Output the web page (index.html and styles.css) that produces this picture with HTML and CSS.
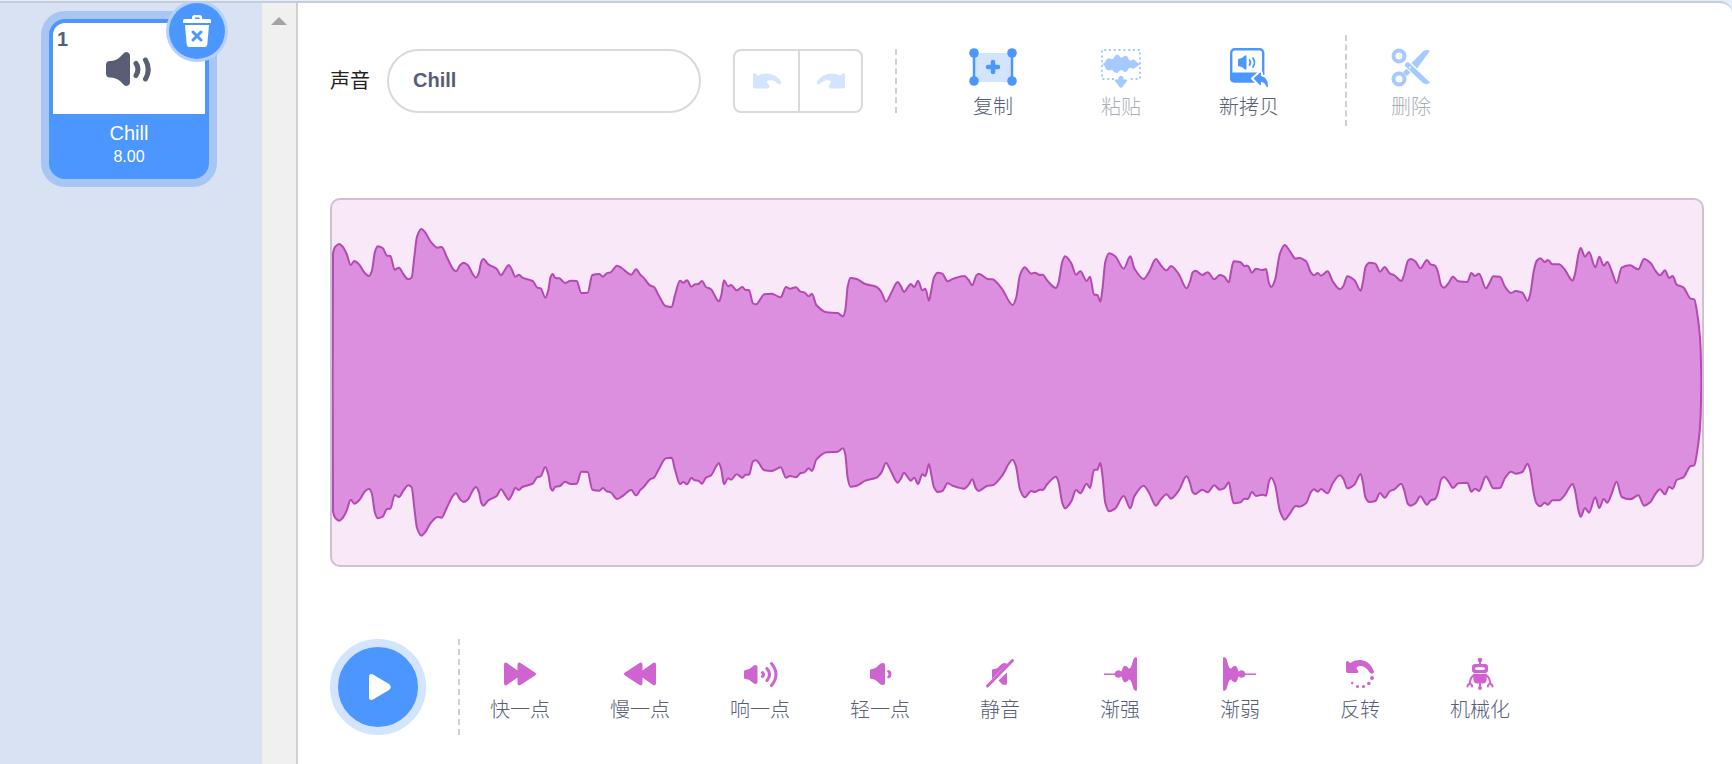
FILE: index.html
```html
<!DOCTYPE html>
<html lang="zh-CN">
<head>
  <meta charset="UTF-8">
  <title>声音</title>
  <link rel="stylesheet" href="styles.css">
</head>
<body>
  <div class="tab-strip"></div>
  <div class="sound-tab">
    <aside class="selector">
      <div class="sound-list">
        <div class="sound-item">
          <div class="sound-image">
            <span class="sound-number">1</span>
            <svg class="sound-icon" viewBox="0 0 46 34">
              <path d="M0 13q0-4 4-4 6 0 10-4l4-4q2-1.500 4-.5 2 1 2 3v27q0 2-2 3-2 1-4-.5l-4-4q-4-3.500-10-3.500-4 0-4-4z"/>
              <path class="wave" d="M30 11.500q4 5.500 0 12M39.500 8q5.500 9.500 0 19"/>
            </svg>
          </div>
          <div class="sound-name">Chill</div>
          <div class="sound-length">8.00</div>
          <button class="delete-btn" aria-label="Delete">
            <svg viewBox="0 0 28 32">
              <path d="M0 5.500q0-1.500 1.500-1.500H9V2.500Q9 0 11.500 0h5Q19 0 19 2.500V4h7.500Q28 4 28 5.500V8H0zM12 4h4.500V2.500H12zM2 10h24l-1.700 19.500Q24 32 21.500 32h-15Q4 32 3.700 29.500z"/>
              <path class="cross" d="M10 17l8 8M18 17l-8 8"/>
            </svg>
          </button>
        </div>
      </div>
      <div class="scrollbar"><span class="scroll-up"></span></div>
    </aside>

    <main class="editor">
      <div class="toolbar">
        <label for="sound-name">声音</label>
        <input type="text" id="sound-name" class="name-input" value="Chill">
        <div class="history">
          <button aria-label="Undo" disabled>
            <svg viewBox="0 0 28 16"><path d="M0 2Q0 0 1.500 0q1 0 2 1.500L5 2.500Q10 0 15 .5 24 1.500 28 9q.5 2-1.200 2.500-1 .2-2-.8Q21 6.500 15.500 7.500 13 8 14.500 10l1 1.500q1.500 2 .5 3-.5 1-2 1H2.500Q0 15.500 0 13z"/></svg>
          </button>
          <button aria-label="Redo" disabled>
            <svg viewBox="0 0 28 16"><path transform="matrix(-1 0 0 1 28 0)" d="M0 2Q0 0 1.500 0q1 0 2 1.500L5 2.500Q10 0 15 .5 24 1.500 28 9q.5 2-1.200 2.500-1 .2-2-.8Q21 6.500 15.500 7.500 13 8 14.500 10l1 1.500q1.500 2 .5 3-.5 1-2 1H2.500Q0 15.500 0 13z"/></svg>
          </button>
        </div>
        <div class="divider"></div>
        <div class="tools">
          <button class="tool">
            <svg viewBox="0 0 48 40">
              <rect x="5" y="5" width="38" height="29" fill="#d3e4ff"/>
              <path d="M5 5v28M43 5v28" stroke="#4c97ff" stroke-width="2.500"/>
              <g fill="#4c97ff">
                <circle cx="5" cy="5" r="4.800"/><circle cx="43" cy="5" r="4.800"/>
                <circle cx="5" cy="33" r="4.800"/><circle cx="43" cy="33" r="4.800"/>
              </g>
              <path d="M24 14v10M19 19h10" stroke="#4c97ff" stroke-width="4.500" stroke-linecap="round"/>
            </svg>
            复制
          </button>
          <button class="tool" disabled>
            <svg viewBox="0 0 42 40">
              <path d="M14 31H2V2h38v29H28" fill="none" stroke="#4c97ff" stroke-width="2" stroke-dasharray="2 2.800"/>
              <path fill="#4c97ff" d="M2 16q3-1 4-3.500 2-3.500 5-1.500 2 1 3-1.500Q16 5 19.500 8q1.500 3 3.500 1 3-2.500 5 .5 1 3.500 3 3 2.500-2 4.500.5l4.500 3.500-4.500 3q-2 2-4.500.5-2-1-3 2-2 3.500-5 1-2-2-3.500 0-3 3.500-6 .5-1-2.500-3-1.500-3 1.500-5-1.500Q5 17 2 16z"/>
              <path fill="#4c97ff" d="M18.500 29.500Q21 26 23.500 29.500v2h2.500q2 0 .8 1.800L22.500 39q-1.500 1.500-3 0l-4.300-5.700Q14 31.500 16 31.500h2.500z"/>
            </svg>
            粘贴
          </button>
          <button class="tool">
            <svg viewBox="0 0 40 40">
              <rect x="2.200" y="1.200" width="32" height="32" rx="3.500" fill="#fff" stroke="#4c97ff" stroke-width="2.400"/>
              <path fill="#4c97ff" d="M1 24.500h34V30q0 4.500-4 4.500H5Q1 34.500 1 30z"/>
              <path fill="#4c97ff" d="M9 12q0-1.500 1.500-1.500 2.500 0 4.500-2.200 2.500-2.200 2.500 0v12.400q0 2.200-2.500 0Q13 18.500 10.500 18.500 9 18.500 9 17z"/>
              <path fill="none" stroke="#4c97ff" stroke-width="1.800" stroke-linecap="round" d="M20.500 12q1.800 2.500 0 5M24 10q3 4.500 0 9"/>
              <path fill="#4c97ff" stroke="#fff" stroke-width="4" paint-order="stroke" d="M24.500 30.500l6-5.500q1.500-1 1.500.5v2.500q7.500 1.500 7 10.500-.3 1.500-1.500.2Q35.500 34 32 33.800v2.400q0 1.500-1.500.5z"/>
            </svg>
            新拷贝
          </button>
        </div>
        <div class="divider divider-tall"></div>
        <button class="tool" disabled>
          <svg viewBox="0 0 40 40">
            <g fill="none" stroke="#4c97ff" stroke-width="4">
              <circle cx="8" cy="8" r="5.500"/><circle cx="8" cy="31" r="5.500"/>
            </g>
            <path fill="#4c97ff" d="M20.500 15L32 3.500Q34 1.500 36.500 2l2.500.8L26 20.500zM12 24l6.500-6 4 4-7 6z"/>
            <path fill="#4c97ff" stroke="#fff" stroke-width="2" paint-order="stroke" d="M14 16q1.500-2.500 4-1.500L39 34.500q-3.500 3-7 .5L14.500 18.500q-1-1-.5-2.500z"/>
            <circle cx="19" cy="19.500" r="1" fill="#fff"/>
          </svg>
          删除
        </button>
      </div>

      <div class="waveform">
        <svg viewBox="0 0 4110 1095" preserveAspectRatio="none">
          <path id="wave"/>
        </svg>
      </div>

      <div class="effects-row">
        <button class="play-btn" aria-label="Play">
          <svg viewBox="0 0 22 26"><path d="M0 3q0-4 4-2.500l16 9.500q3.500 3 0 6L4 25.500Q0 27 0 23z"/></svg>
        </button>
        <div class="divider divider-effects"></div>
        <div class="effects">
          <button class="effect">
            <svg viewBox="0 0 32 32"><path d="M0 7q0-3.500 3-2l10.500 7.500V7q0-3.500 3-2L31 14.500q2 1.500 0 3L16.500 27q-3 1.500-3-2v-5.500L3 27q-3 1.500-3-2z"/></svg>
            快一点
          </button>
          <button class="effect">
            <svg viewBox="0 0 32 32"><path transform="matrix(-1 0 0 1 32 0)" d="M0 7q0-3.500 3-2l10.500 7.500V7q0-3.500 3-2L31 14.500q2 1.500 0 3L16.500 27q-3 1.500-3-2v-5.500L3 27q-3 1.500-3-2z"/></svg>
            慢一点
          </button>
          <button class="effect">
            <svg viewBox="0 0 32 32">
              <path d="M0 13.500Q0 12 1.500 12q3.500 0 6.500-3 1.500-2 3.500-2 2 0 2 2v15q0 2-2 2t-3.500-2q-3-3-6.500-3Q0 21 0 19.500z"/>
              <path class="line" d="M18.500 14.500q2 2 0 4M23 10.500q5 6 0 12M27.500 5.500q9 11 0 22"/>
            </svg>
            响一点
          </button>
          <button class="effect">
            <svg viewBox="0 0 32 32">
              <path d="M6 12.500Q6 11 7.500 11q4 0 7-3.800Q16.500 5 19 5q2 0 2 2v18q0 2-2 2-2.500 0-4.500-2.200-3-3.800-7-3.800Q6 21 6 19.500z"/>
              <path d="M23 13.500q.5-2 2.500-1.300 2 1.300 2 3.800 0 3-2 4-2 1-2.500-1 1.500-1 1.500-2.700 0-1.500-1.500-2.800z"/>
            </svg>
            轻一点
          </button>
          <button class="effect">
            <svg viewBox="0 0 32 32">
              <path d="M8 12.500Q8 11 9.500 11q4 0 6.500-3.500Q18 5 20.500 5l3 .8L8 21zM23 14.500V25q0 2-2 2-3 0-4.500-2.500L14.500 22.500z"/>
              <path class="line" d="M3.500 28l25-25.500"/>
            </svg>
            静音
          </button>
          <button class="effect">
            <svg viewBox="0 0 32 32">
              <path d="M0 15.500h10.500q1-3 3.500-3.300 2 0 3 1.300 1-.5 1.500-3 1-3.500 3.500-2.500 2 .5 2.500 2.500 2 .5 3.200-3.500L29.500 1Q30.500-.500 32-1 33-1 33 1v30q0 2-1 2-1.500-.500-2.500-2l-1.800-6q-1.200-4-3.200-3.500-.5 2-2.500 2.500-2.500 1-3.500-2.500-.5-2.500-1.500-3-1 1.300-3 1.300-2.500-.3-3.500-2.800H0z"/>
            </svg>
            渐强
          </button>
          <button class="effect">
            <svg viewBox="0 0 32 32">
              <path transform="matrix(-1 0 0 1 32 0)" d="M0 15.500h10.500q1-3 3.500-3.300 2 0 3 1.300 1-.5 1.500-3 1-3.500 3.500-2.500 2 .5 2.500 2.500 2 .5 3.200-3.500L29.500 1Q30.500-.500 32-1 33-1 33 1v30q0 2-1 2-1.500-.500-2.500-2l-1.800-6q-1.200-4-3.200-3.500-.5 2-2.500 2.500-2.500 1-3.500-2.500-.5-2.500-1.500-3-1 1.300-3 1.300-2.500-.3-3.500-2.800H0z"/>
            </svg>
            渐弱
          </button>
          <button class="effect">
            <svg viewBox="0 0 32 32">
              <path d="M2 5Q2 3 3.500 3 5 3.300 6 5q5-3.500 11-3 8 1 12 9 1.500 3 .5 4-2 1.500-4-.5-3-5.500-8-6.500-4-.3-5 1.500 0 1.500 1.500 3 1 2.500-1 2.500H4q-2 0-2-2z"/>
              <circle cx="28" cy="20" r="2"/><circle cx="24.800" cy="25.500" r="1.800"/><circle cx="19.500" cy="28.500" r="1.600"/><circle cx="13.500" cy="28.500" r="1.500"/><circle cx="8.200" cy="25" r="1.200"/>
            </svg>
            反转
          </button>
          <button class="effect">
            <svg viewBox="0 0 32 32">
              <path fill-rule="evenodd" d="M11 6h10q3 0 3 3v3q0 3-3 3H11q-3 0-3-3V9q0-3 3-3zm1.500 3.200q-1.500 0-1.500 1.400t1.500 1.400h7q1.500 0 1.500-1.400t-1.500-1.400z"/>
              <path d="M9 15.800h14l-.5 6.700q-.5 3-3.500 3h-6q-3 0-3.500-3z"/>
              <circle cx="16" cy="2" r="2.300"/><circle cx="16" cy="30" r="2"/>
              <path class="thin" d="M16 3v4M16 25v4M9.500 17.500Q6 20 5.800 25.500M22.500 17.500Q26 20 26.200 25.500M3.500 28.500q0-2.500 2.300-2.500t2.300 2.500M23.900 28.500q0-2.500 2.300-2.500t2.300 2.500"/>
            </svg>
            机械化
          </button>
        </div>
      </div>
    </main>
  </div>

  <script src="waveform.js"></script>
</body>
</html>
```
FILE: styles.css
```css
* {
  box-sizing: border-box;
}
body {
  margin: 0;
  min-height: 100vh;
  display: flex;
  flex-direction: column;
  background: #e5edf8;
  color: #575e75;
  font-family: "Liberation Sans", "Noto Sans CJK SC", sans-serif;
  font-size: 20px;
  line-height: 24px;
}
button {
  padding: 0;
  border: none;
  background: none;
  color: inherit;
  font: inherit;
  cursor: pointer;
}
svg {
  display: block;
  overflow: visible;
}
.tab-strip {
  height: 1px;
}
.sound-tab {
  flex: 1;
  display: flex;
  border-top: 2px solid #c3cddc;
  border-top-right-radius: 12px;
  background: #fff;
}

/* Sound list */
.selector {
  flex: none;
  display: flex;
  width: 298px;
  border-right: 2px solid #d0d0d2;
  background: #d9e2f3;
  overflow: hidden;
}
.sound-list {
  flex: 1;
  padding: 16px 4px 0 0;
}
.sound-item {
  position: relative;
  width: 160px;
  height: 160px;
  margin: 0 auto;
  border: 4px solid #4c97ff;
  border-radius: 16px;
  background: #4c97ff;
  box-shadow: 0 0 0 8px #a8c6f4;
  color: #fff;
  text-align: center;
}
.sound-image {
  display: flex;
  align-items: center;
  justify-content: center;
  height: 91px;
  margin-bottom: 7px;
  border-radius: 12px 12px 0 0;
  background: #fff;
}
.sound-number {
  position: absolute;
  top: 4px;
  left: 4px;
  color: #575e75;
  font-weight: bold;
}
.sound-icon {
  width: 46px;
  height: 34px;
  fill: #575e75;
}
.sound-icon .wave {
  fill: none;
  stroke: #575e75;
  stroke-width: 5;
  stroke-linecap: round;
}
.sound-length {
  font-size: 16px;
}
.delete-btn {
  position: absolute;
  top: -20px;
  right: -20px;
  display: flex;
  align-items: center;
  justify-content: center;
  width: 56px;
  height: 56px;
  border-radius: 50%;
  background: #4c97ff;
  box-shadow: 0 0 0 3px #b5d1fb;
}
.delete-btn svg {
  width: 28px;
  height: 32px;
  fill: #fff;
}
.delete-btn .cross {
  stroke: #4c97ff;
  stroke-width: 3;
  stroke-linecap: round;
}
.scrollbar {
  width: 34px;
  padding-top: 14px;
  background: #f0f0f0;
}
.scroll-up {
  display: block;
  width: 16px;
  margin: 0 auto;
  border: 8px solid transparent;
  border-top: none;
  border-bottom-color: #a3a3a3;
}

/* Editor */
.editor {
  flex: 1;
  min-width: 0;
  display: flex;
  flex-direction: column;
  gap: 72px;
  padding: 32px 28px 29px 32px;
}
.toolbar,
.effects-row,
.tools,
.effects {
  display: flex;
  align-items: center;
}
.toolbar label {
  margin-right: 17px;
  color: #222;
}
.name-input {
  flex: 0 1 314px;
  min-width: 0;
  height: 64px;
  margin-right: 32px;
  padding: 0 24px;
  border: 2px solid #d9d9d9;
  border-radius: 32px;
  background: #fff;
  color: #575e75;
  font: bold 20px "Liberation Sans", sans-serif;
}
.history {
  display: flex;
  height: 64px;
  border: 2px solid #d9d9d9;
  border-radius: 8px;
}
.history button {
  display: flex;
  align-items: center;
  justify-content: center;
  width: 63px;
}
.history button + button {
  border-left: 2px solid #d9d9d9;
}
.history svg {
  width: 28px;
  height: 16px;
  fill: #d3e4ff;
}
.divider {
  height: 64px;
  margin: 0 32px;
  border-left: 2px dashed #d0d0d2;
}
.divider-tall {
  height: 91px;
  margin-right: 0;
}
.divider-effects {
  height: 96px;
  margin-right: 0;
}
.tool,
.effect {
  display: flex;
  flex-direction: column;
  align-items: center;
  font-weight: 300;
}
.tool {
  gap: 7px;
  width: 128px;
  padding-top: 5px;
}
.tool svg {
  height: 40px;
}
.tool:disabled {
  opacity: 0.5;
}
.effect {
  gap: 8px;
  width: 120px;
  padding-top: 6px;
}
.effect svg {
  height: 32px;
  fill: #cf63cf;
}
.effect .line,
.effect .thin {
  fill: none;
  stroke: #cf63cf;
  stroke-width: 3;
  stroke-linecap: round;
}
.effect .thin {
  stroke-width: 2;
}
.waveform {
  flex: 1;
  min-height: 200px;
  border: 2px solid #d0c0d4;
  border-radius: 10px;
  background: #f8e8f8;
  overflow: hidden;
}
.waveform svg {
  width: 100%;
  height: 100%;
}
#wave {
  fill: #dc8fde;
  stroke: #b548b3;
  stroke-width: 2;
  stroke-linejoin: round;
  vector-effect: non-scaling-stroke;
}
.play-btn {
  display: flex;
  align-items: center;
  justify-content: center;
  width: 96px;
  height: 96px;
  padding-left: 3px;
  border: 8px solid #d3e4ff;
  border-radius: 50%;
  background: #4c97ff;
}
.play-btn svg {
  width: 22px;
  height: 26px;
  fill: #fff;
}
```
FILE: waveform.js
```javascript
// Outline of the upper half, [x, y]; the lower half mirrors it
const MIDDLE = 547;
const TOP = 30;
const points = [
  [2, 577], [3, 190], [10, 170], [22, 162], [32, 170], [44, 192], [56, 225], [67, 213], [82, 224], [99, 250],
  [111, 258], [119, 245], [129, 185], [137, 169], [152, 174], [165, 197], [175, 198], [188, 239], [201, 233],
  [214, 252], [229, 268], [239, 262], [247, 200], [255, 140], [268, 117], [280, 128], [296, 155], [317, 173],
  [329, 171], [344, 200], [364, 238], [372, 244], [384, 226], [395, 218], [407, 225], [424, 255], [432, 263],
  [440, 250], [448, 215], [454, 207], [469, 223], [494, 236], [507, 256], [520, 238], [530, 225], [539, 238],
  [550, 260], [561, 254], [571, 263], [602, 273], [616, 293], [626, 295], [640, 323], [649, 300], [656, 260],
  [662, 252], [670, 264], [682, 265], [699, 279], [716, 272], [734, 273], [748, 309], [767, 308], [781, 255],
  [802, 252], [813, 260], [824, 250], [836, 247], [855, 227], [869, 234], [898, 254], [912, 238], [926, 255],
  [934, 262], [954, 286], [966, 291], [979, 314], [1002, 349], [1019, 351], [1029, 315], [1044, 272],
  [1054, 278], [1065, 271], [1078, 290], [1089, 283], [1099, 282], [1110, 273], [1122, 291], [1136, 297],
  [1161, 334], [1168, 315], [1176, 271], [1188, 289], [1197, 285], [1214, 301], [1231, 291], [1241, 300],
  [1251, 300], [1263, 340], [1272, 343], [1297, 313], [1319, 311], [1346, 322], [1362, 291], [1374, 296],
  [1392, 292], [1406, 305], [1417, 307], [1430, 319], [1440, 311], [1453, 345], [1484, 367], [1517, 369],
  [1533, 379], [1540, 360], [1547, 290], [1555, 264], [1574, 267], [1600, 282], [1634, 291], [1648, 306],
  [1662, 335], [1678, 308], [1697, 276], [1707, 289], [1716, 306], [1726, 294], [1736, 282], [1747, 291],
  [1758, 272], [1771, 301], [1780, 296], [1791, 332], [1798, 300], [1806, 262], [1817, 248], [1831, 251],
  [1847, 274], [1864, 266], [1897, 258], [1910, 270], [1921, 286], [1932, 258], [1940, 251], [1967, 267],
  [1981, 268], [2009, 295], [2042, 345], [2052, 325], [2064, 255], [2078, 232], [2098, 251], [2108, 248],
  [2124, 255], [2132, 254], [2146, 272], [2172, 294], [2179, 280], [2191, 215], [2199, 199], [2218, 220],
  [2232, 254], [2245, 244], [2264, 273], [2274, 260], [2286, 314], [2296, 315], [2305, 335], [2311, 300],
  [2320, 215], [2331, 190], [2349, 198], [2375, 236], [2395, 199], [2407, 235], [2435, 267], [2450, 248],
  [2472, 207], [2486, 225], [2504, 241], [2517, 228], [2540, 252], [2564, 295], [2574, 275], [2582, 247],
  [2590, 242], [2611, 255], [2627, 247], [2647, 268], [2663, 255], [2676, 259], [2691, 277], [2697, 245],
  [2705, 214], [2726, 217], [2737, 228], [2747, 227], [2760, 248], [2772, 236], [2791, 240], [2802, 237],
  [2811, 280], [2818, 291], [2829, 270], [2844, 190], [2858, 165], [2874, 184], [2891, 206], [2902, 204],
  [2922, 214], [2937, 248], [2946, 256], [2957, 249], [2967, 257], [2987, 244], [3002, 274], [3024, 298],
  [3034, 288], [3046, 259], [3067, 270], [3086, 302], [3092, 280], [3101, 230], [3112, 218], [3130, 221],
  [3144, 245], [3158, 231], [3174, 251], [3187, 256], [3208, 273], [3216, 255], [3228, 212], [3236, 207],
  [3250, 214], [3265, 235], [3285, 210], [3296, 223], [3309, 227], [3317, 243], [3328, 287], [3336, 293],
  [3349, 280], [3363, 260], [3379, 274], [3406, 276], [3418, 249], [3429, 258], [3441, 251], [3462, 295],
  [3472, 280], [3484, 259], [3504, 260], [3519, 290], [3537, 309], [3551, 303], [3571, 308], [3587, 333],
  [3594, 315], [3606, 240], [3614, 213], [3625, 205], [3638, 216], [3648, 210], [3661, 223], [3681, 223],
  [3697, 237], [3722, 272], [3729, 252], [3740, 190], [3746, 174], [3759, 200], [3771, 186], [3790, 232],
  [3802, 200], [3815, 227], [3826, 216], [3838, 240], [3854, 279], [3869, 233], [3894, 226], [3919, 238],
  [3936, 207], [3956, 219], [3970, 242], [3984, 256], [3999, 241], [4011, 264], [4022, 258], [4034, 284],
  [4054, 292], [4076, 326], [4087, 328], [4094, 360], [4102, 420], [4106, 480], [4108, 577]
].map(([x, y]) => [x, y - TOP]);

const lean = (a, b) => (b[1] - a[1]) / (b[0] - a[0]);

// Slope at a point, flat at every peak and valley
function slope(pts, i) {
  if (i === 0) return lean(pts[0], pts[1]);
  if (i === pts.length - 1) return lean(pts[i - 1], pts[i]);
  const a = lean(pts[i - 1], pts[i]);
  const b = lean(pts[i], pts[i + 1]);
  return a * b <= 0 ? 0 : 2 * a * b / (a + b);
}

function curve(pts, mirror) {
  const side = y => mirror ? 2 * MIDDLE - y : y;
  let d = `M${pts[0][0]} ${side(pts[0][1])}`;
  for (let i = 1; i < pts.length; i++) {
    const [x0, y0] = pts[i - 1];
    const [x1, y1] = pts[i];
    const third = (x1 - x0) / 3;
    const c0 = side(y0 + slope(pts, i - 1) * third);
    const c1 = side(y1 - slope(pts, i) * third);
    d += `C${x0 + third} ${c0} ${x1 - third} ${c1} ${x1} ${side(y1)}`;
  }
  return d;
}

document.querySelector('#wave').setAttribute('d', curve(points, false) + curve(points, true));
```
